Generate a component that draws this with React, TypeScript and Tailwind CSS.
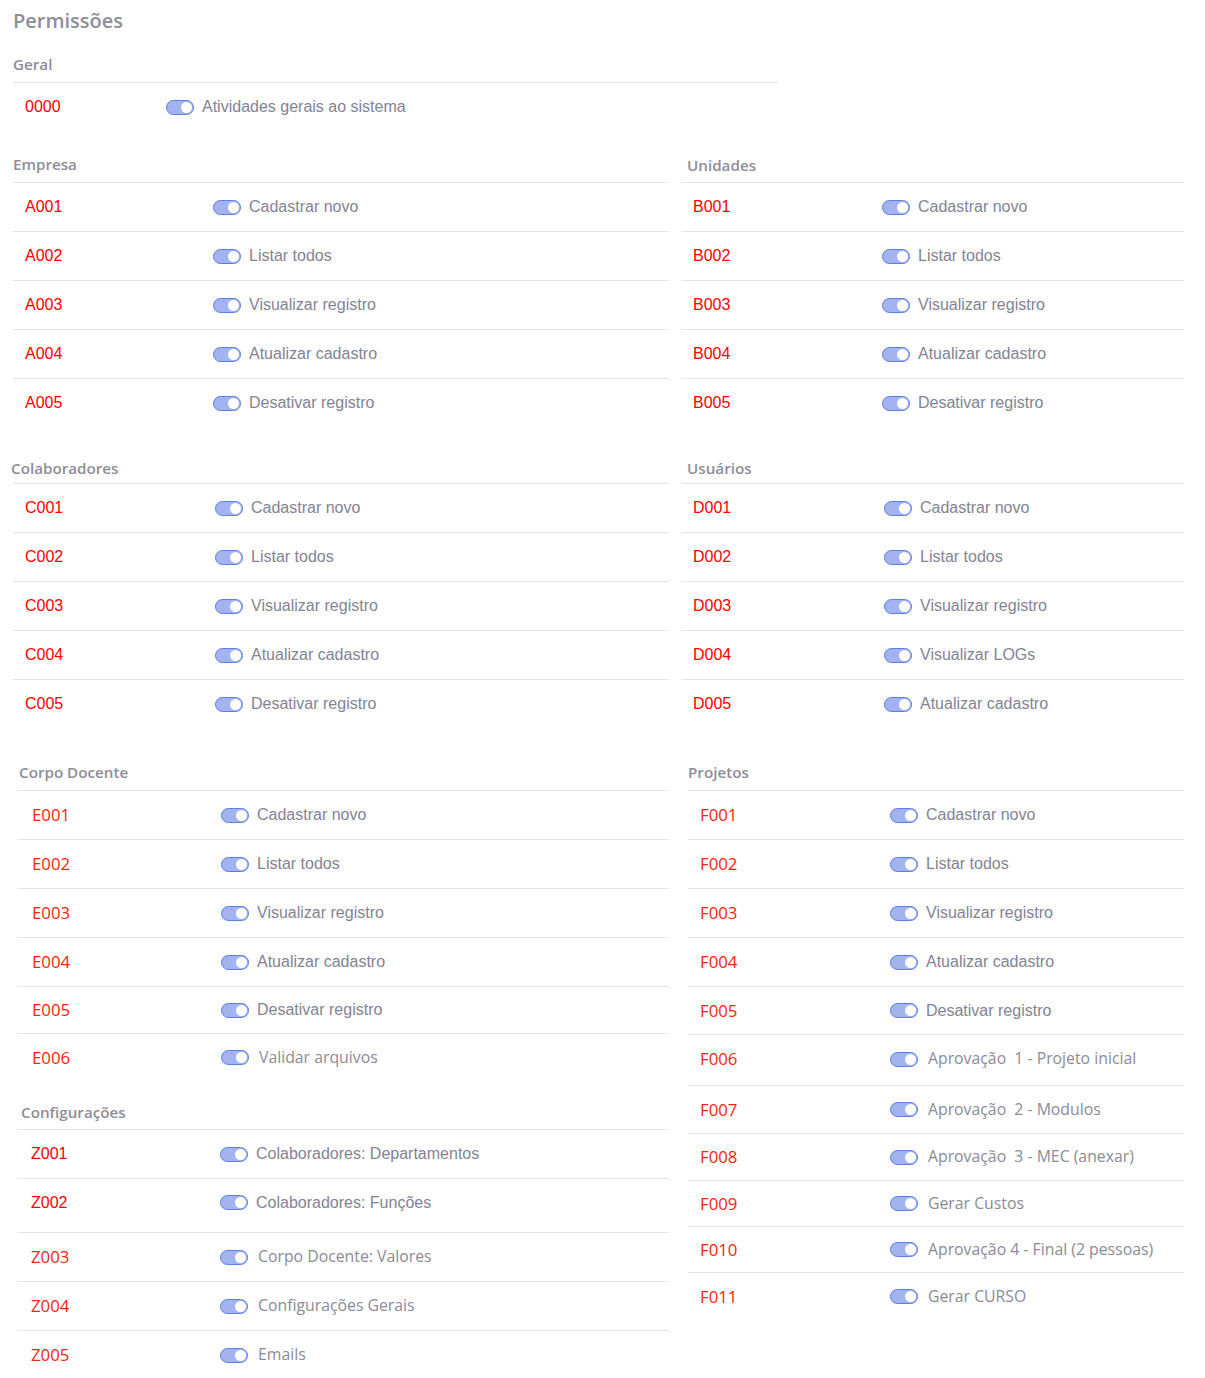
import React from "react";

type Row = { code: string; label: string; alt?: boolean; altCode?: boolean; h?: string; shift?: string };

const ARIAL = "font-['Liberation_Sans',Arial,sans-serif]";
const NUN = "font-['Open_Sans','Noto_Sans',sans-serif]";

function Toggle() {
  return (
    <span className="inline-flex items-center justify-end w-[28px] h-[15px] rounded-full bg-[#a3b3f0] border border-[#5c7ee6] pr-[1px] shrink-0">
      <span className="block w-[11px] h-[11px] rounded-full bg-white" />
    </span>
  );
}

function Section({
  title,
  rows,
  wrap,
  head,
  titleCls = "",
  code,
}: {
  title: string;
  rows: Row[];
  wrap: string;
  head: string;
  titleCls?: string;
  code: string;
}) {
  return (
    <div className={wrap}>
      <div
        className={`flex items-center h-[37px] border-b border-[#e4e4ef] text-[15.2px] font-semibold text-[#8d8d98] ${NUN} ${head}`}
      >
        <span className={titleCls}>{title}</span>
      </div>
      {rows.map((r, i) => {
        const last = i === rows.length - 1;
        return (
          <div
            key={r.code}
            className={`flex items-center ${last ? "" : "border-b border-[#e4e4ef]"} ${r.h ?? (last ? "h-[48px]" : "h-[49px]")}`}
          >
            <div className={`flex items-center w-full ${r.shift ?? ""}`}>
              <span
                className={`shrink-0 ${code} ${
                  r.altCode ? `${NUN} text-[16.8px] text-[#f3250f]` : `${ARIAL} text-[16px] text-[#ff0000]`
                }`}
              >
                {r.code}
              </span>
              <Toggle />
              <span
                className={`whitespace-pre ${
                  r.alt ? `ml-[10px] ${NUN} text-[15.8px] text-[#8b8b98]` : `ml-[8px] ${ARIAL} text-[16px] text-[#838394]`
                }`}
              >
                {r.label}
              </span>
            </div>
          </div>
        );
      })}
    </div>
  );
}

const CRUD = ["Cadastrar novo", "Listar todos", "Visualizar registro", "Atualizar cadastro", "Desativar registro"];
const std = (p: string, labels: string[], altCode = false): Row[] =>
  labels.map((l, i) => ({ code: `${p}00${i + 1}`, label: l, altCode }));

export default function App() {
  const empresa = std("A", CRUD);
  const unidades = std("B", CRUD);
  const colab = std("C", CRUD);
  const usuarios = std("D", ["Cadastrar novo", "Listar todos", "Visualizar registro", "Visualizar LOGs", "Atualizar cadastro"]);
  const corpo: Row[] = [
    ...std("E", CRUD, true),
    { code: "E006", label: "Validar arquivos", alt: true, altCode: true, h: "h-[47px]" },
  ];
  corpo[4] = { ...corpo[4], h: "h-[47px]" };
  const config: Row[] = [
    { code: "Z001", label: "Colaboradores: Departamentos" },
    { code: "Z002", label: "Colaboradores: Funções", h: "h-[54px]", shift: "-translate-y-[3px]" },
    { code: "Z003", label: "Corpo Docente: Valores", alt: true, altCode: true },
    { code: "Z004", label: "Configurações Gerais", alt: true, altCode: true },
    { code: "Z005", label: "Emails", alt: true, altCode: true },
  ];
  const projetos: Row[] = [
    ...std("F", CRUD, true),
    { code: "F006", label: "Aprovação  1 - Projeto inicial", alt: true, altCode: true, h: "h-[51px]", shift: "-translate-y-[1px]" },
    { code: "F007", label: "Aprovação  2 - Modulos", alt: true, altCode: true, h: "h-[48px]" },
    { code: "F008", label: "Aprovação  3 - MEC (anexar)", alt: true, altCode: true, h: "h-[47px]" },
    { code: "F009", label: "Gerar Custos", alt: true, altCode: true, h: "h-[46px]" },
    { code: "F010", label: "Aprovação 4 - Final (2 pessoas)", alt: true, altCode: true, h: "h-[46px]" },
    { code: "F011", label: "Gerar CURSO", alt: true, altCode: true, h: "h-[47px]" },
  ];
  projetos[4] = { ...projetos[4], h: "h-[48px]" };

  return (
    <div className={`w-[1205px] min-h-[1378px] bg-white ${ARIAL}`}>
      <div className="pl-[13px]">
        <div className={`h-[46px] pt-[6px] text-[20px] font-semibold text-[#8d8d98] ${NUN}`}>Permissões</div>
        <Section
          title="Geral"
          rows={[{ code: "0000", label: "Atividades gerais ao sistema" }]}
          wrap="w-[765px]"
          head=""
          code="ml-[12px] w-[141px]"
        />
        <div className="flex gap-[13px]">
          <div className="w-[656px] shrink-0">
            <Section title="Empresa" rows={empresa} wrap="mt-[15px]" head="" code="ml-[12px] w-[188px]" />
            <Section title="Colaboradores" rows={colab} wrap="mt-[20px]" head="pt-[6px]" titleCls="-ml-[2px]" code="ml-[12px] w-[190px]" />
            <Section title="Corpo Docente" rows={corpo} wrap="mt-[26px] ml-[5px]" head="pl-[1px]" code="ml-[14px] w-[189px]" />
            <Section title="Configurações" rows={config} wrap="mt-[12px] ml-[5px]" head="pl-[3px] pt-[2px]" code="ml-[13px] w-[189px]" />
          </div>
          <div className="w-[502px] shrink-0">
            <Section title="Unidades" rows={unidades} wrap="mt-[15px]" head="pl-[5px] pt-[2px]" code="ml-[11px] w-[189px]" />
            <Section title="Usuários" rows={usuarios} wrap="mt-[20px]" head="pl-[5px] pt-[6px]" code="ml-[11px] w-[191px]" />
            <Section title="Projetos" rows={projetos} wrap="mt-[26px] ml-[6px]" head="" code="ml-[12px] w-[190px]" />
          </div>
        </div>
      </div>
    </div>
  );
}
